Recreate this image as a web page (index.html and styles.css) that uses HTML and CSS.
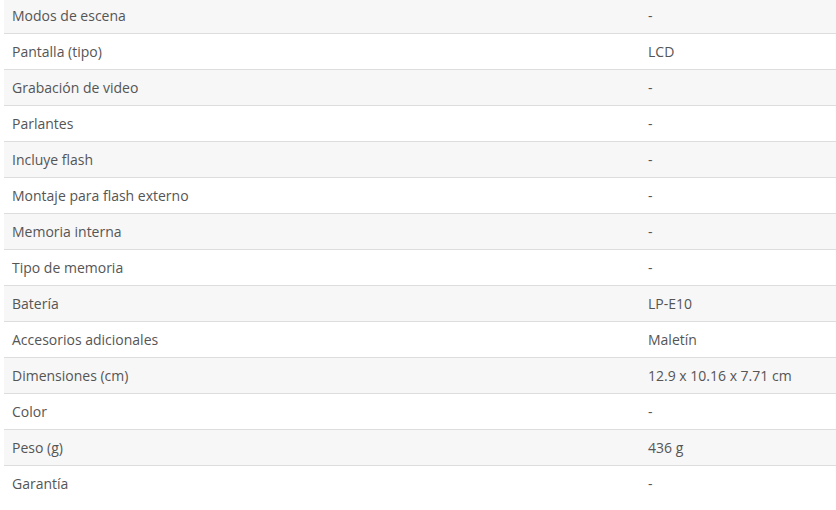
FILE: index.html
```html
<!DOCTYPE html>
<html lang="es">
<head>
<meta charset="utf-8">
<link rel="stylesheet" href="styles.css">
</head>
<body>
<div class="specs">
  <div class="row"><div class="label">Modos de escena</div><div class="value">-</div></div>
  <div class="row"><div class="label">Pantalla (tipo)</div><div class="value">LCD</div></div>
  <div class="row"><div class="label">Grabación de video</div><div class="value">-</div></div>
  <div class="row"><div class="label">Parlantes</div><div class="value">-</div></div>
  <div class="row"><div class="label">Incluye flash</div><div class="value">-</div></div>
  <div class="row"><div class="label">Montaje para flash externo</div><div class="value">-</div></div>
  <div class="row"><div class="label">Memoria interna</div><div class="value">-</div></div>
  <div class="row"><div class="label">Tipo de memoria</div><div class="value">-</div></div>
  <div class="row"><div class="label">Batería</div><div class="value">LP-E10</div></div>
  <div class="row"><div class="label">Accesorios adicionales</div><div class="value">Maletín</div></div>
  <div class="row"><div class="label">Dimensiones (cm)</div><div class="value">12.9 x 10.16 x 7.71 cm</div></div>
  <div class="row"><div class="label">Color</div><div class="value">-</div></div>
  <div class="row"><div class="label">Peso (g)</div><div class="value">436 g</div></div>
  <div class="row"><div class="label">Garantía</div><div class="value">-</div></div>
</div>
</body>
</html>
```
FILE: styles.css
```css
html, body {
  margin: 0;
  padding: 0;
  background: #ffffff;
}
body {
  font-family: "Open Sans", "DejaVu Sans", sans-serif;
  font-size: 14px;
  color: #555555;
}
.specs {
  margin: -2px 0 0 4px;
  display: flex;
  flex-direction: column;
}
.row {
  display: grid;
  grid-template-columns: 636px 1fr;
  height: 35px;
  align-items: center;
  border-bottom: 1px solid #dddddd;
}
.row:nth-child(odd) {
  background: #f7f7f7;
}
.row:last-child {
  border-bottom: none;
}
.label, .value {
  padding-left: 8px;
}
```
